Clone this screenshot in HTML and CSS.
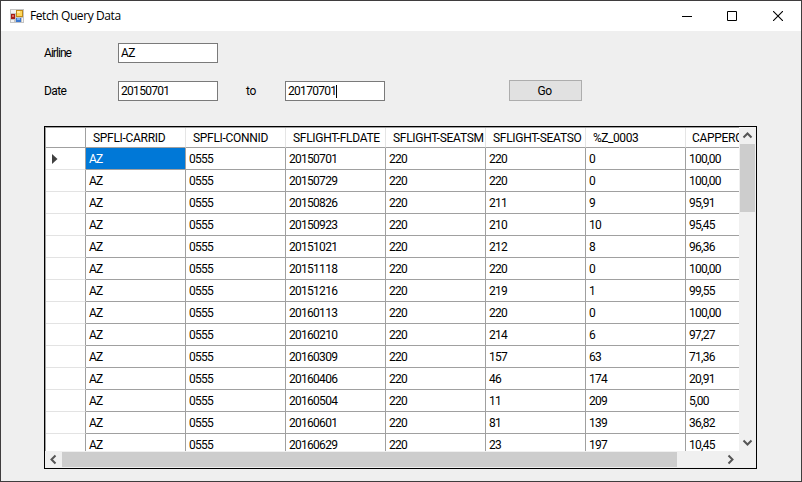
FILE: index.html
```
<!DOCTYPE html>
<html lang="en">
<head>
<meta charset="utf-8">
<title>Fetch Query Data</title>
<link rel="stylesheet" href="styles.css">
</head>
<body>
<div class="window">
  <header class="titlebar">
    <svg class="app-icon" width="14" height="14" viewBox="0 0 14 14" shape-rendering="crispEdges">
      <rect width="14" height="14" fill="#c4c4c4"/>
      <path d="M1 1h5v3H1zM1 11h3v2H1zM12 9h1v4h-1z" fill="#f4f4f4"/>
      <rect x="6" y="1" width="7" height="7" fill="#c08a18"/>
      <rect x="7" y="2" width="5" height="5" fill="#ffd75a"/>
      <rect x="7" y="2" width="3" height="2" fill="#ffe9a0"/>
      <rect x="1" y="5" width="4" height="5" fill="#a51d16"/>
      <rect x="2" y="6" width="2" height="2" fill="#e26a5c"/>
      <rect x="6" y="9" width="5" height="4" fill="#3c78d0"/>
      <rect x="7" y="9" width="3" height="2" fill="#83b4f2"/>
    </svg>
    <span class="title">Fetch Query Data</span>
    <div class="controls">
      <svg class="minimise" width="10" height="10"><path d="M0 5.5h10" stroke="#000"/></svg>
      <svg width="10" height="10"><path d="M.5.5h9v9h-9z" fill="none" stroke="#000"/></svg>
      <svg width="10" height="10"><path d="M0 0l10 10M10 0L0 10" stroke="#000" stroke-width="1.1"/></svg>
    </div>
  </header>
  <main class="form">
    <div class="line first"><span class="label airline">Airline</span><span class="field">AZ</span></div>
    <div class="line"><span class="label">Date</span><span class="field">20150701</span><span class="to">to</span><span class="field">20170701<i class="caret"></i></span><span class="button">Go</span></div>
    <div class="grid">
      <div class="view"><table class="table">
        <colgroup><col class="marker"><col><col><col><col><col><col><col></colgroup>
        <thead><tr><th></th><th>SPFLI-CARRID</th><th>SPFLI-CONNID</th><th>SFLIGHT-FLDATE</th><th>SFLIGHT-SEATSM</th><th>SFLIGHT-SEATSO</th><th class="free">%Z_0003</th><th class="rate">CAPPERC</th></tr></thead>
        <tbody id="rows"></tbody>
      </table></div>
      <div class="vbar">
        <svg width="15" height="16"><path d="M3.5 10.5L7.5 6.5l4 4" fill="none" stroke="#555" stroke-width="2"/></svg>
        <div class="vthumb"></div>
        <svg class="down" width="15" height="16"><path d="M3.5 5.5l4 4 4-4" fill="none" stroke="#555" stroke-width="2"/></svg>
      </div>
      <div class="hbar">
        <svg width="17" height="15"><path d="M10.5 3.5l-4 4 4 4" fill="none" stroke="#555" stroke-width="2"/></svg>
        <div class="hthumb"></div>
        <svg class="right" width="17" height="15"><path d="M6.5 3.5l4 4-4 4" fill="none" stroke="#555" stroke-width="2"/></svg>
      </div>
    </div>
  </main>
</div>
<script src="rows.js"></script>
</body>
</html>
```
FILE: styles.css
```
* { box-sizing: border-box; }
body { margin: 0; font-family: Roboto, "Liberation Sans", sans-serif; font-size: 12px; color: #000; }
.window { width: 802px; height: 482px; border: 1px solid #3f3d3e; background: #efefef; overflow: hidden; }
.titlebar { display: flex; align-items: center; height: 30px; background: #fff; padding: 0 18px 0 9px; }
.app-icon { margin-top: -1px; }
.title { margin-left: 6px; font: 12px/30px "Open Sans", sans-serif; letter-spacing: -0.41px; }
.controls { margin-left: auto; display: flex; gap: 36px; margin-top: -1px; }
.controls svg { display: block; }
.controls .minimise { margin-right: -1px; }
.form { padding: 12px 0 0 43px; }
.line { display: flex; align-items: center; height: 20px; letter-spacing: -0.7px; }
.first { margin-bottom: 18px; }
.label { width: 74px; letter-spacing: -0.6px; }
.airline { letter-spacing: -0.95px; }
.field { width: 100px; height: 20px; display: flex; align-items: center; border: 1px solid #7a7a7a; background: #fff; padding-left: 2px; }
.caret { width: 1px; height: 13px; background: #000; }
.to { width: 67px; padding-left: 28px; letter-spacing: -0.3px; }
.button { width: 73px; height: 21px; margin: -1px 0 0 124px; background: #e1e1e1; border: 1px solid #adadad; text-align: center; line-height: 20px; letter-spacing: -0.6px; padding-right: 2px; }
.grid { display: grid; grid-template: 324px 17px / 694px 17px; width: 713px; height: 343px; margin-top: 25px; border: 1px solid #000; background: #f0f0f0; }
.view { overflow: hidden; background: #fff; border-left: 1px solid #a0a0a0; border-top: 1px solid #a0a0a0; }
.table { table-layout: fixed; width: 740px; border-spacing: 0; }
.table col { width: 100px; }
.table col.marker { width: 40px; }
th, td { padding: 0; overflow: hidden; white-space: nowrap; text-align: left; font-weight: 400; border-right: 1px solid #a0a0a0; border-bottom: 1px solid #a0a0a0; }
th { height: 20px; padding-left: 7px; border-right-color: #e5e5e5; letter-spacing: -0.3px; }
th:first-child { border-right-color: #a0a0a0; }
.free { letter-spacing: -0.45px; }
.rate { padding-left: 6px; }
td { height: 22px; padding-left: 3px; letter-spacing: -0.72px; }
td:first-child { border-bottom-color: #e3e3e3; padding-left: 6px; }
td svg { display: block; }
.selected { background: #0078d7; color: #fff; }
.vbar { display: flex; flex-direction: column; padding: 0 1px; }
.vbar svg, .hbar svg { display: block; }
.vthumb { height: 68px; margin-top: 1px; background: #cdcdcd; }
.down { margin-top: auto; }
.hbar { display: flex; padding: 1px 0; grid-column: 1; }
.hthumb { width: 615px; background: #cdcdcd; }
.right { margin-left: auto; }
```
FILE: rows.js
```
const flights = [
  ["20150701", "220", "0", "100,00"],
  ["20150729", "220", "0", "100,00"],
  ["20150826", "211", "9", "95,91"],
  ["20150923", "210", "10", "95,45"],
  ["20151021", "212", "8", "96,36"],
  ["20151118", "220", "0", "100,00"],
  ["20151216", "219", "1", "99,55"],
  ["20160113", "220", "0", "100,00"],
  ["20160210", "214", "6", "97,27"],
  ["20160309", "157", "63", "71,36"],
  ["20160406", "46", "174", "20,91"],
  ["20160504", "11", "209", "5,00"],
  ["20160601", "81", "139", "36,82"],
  ["20160629", "23", "197", "10,45"]
];
const arrow = '<svg width="6" height="10"><path d="M0 0l5.5 5L0 10z" fill="#404040"/></svg>';
document.getElementById("rows").innerHTML = flights.map(([date, sold, free, rate], i) =>
  `<tr><td>${i ? "" : arrow}</td><td${i ? "" : ' class="selected"'}>AZ</td>` +
  ["0555", date, "220", sold, free, rate].map(v => `<td>${v}</td>`).join("") + "</tr>"
).join("");
```
